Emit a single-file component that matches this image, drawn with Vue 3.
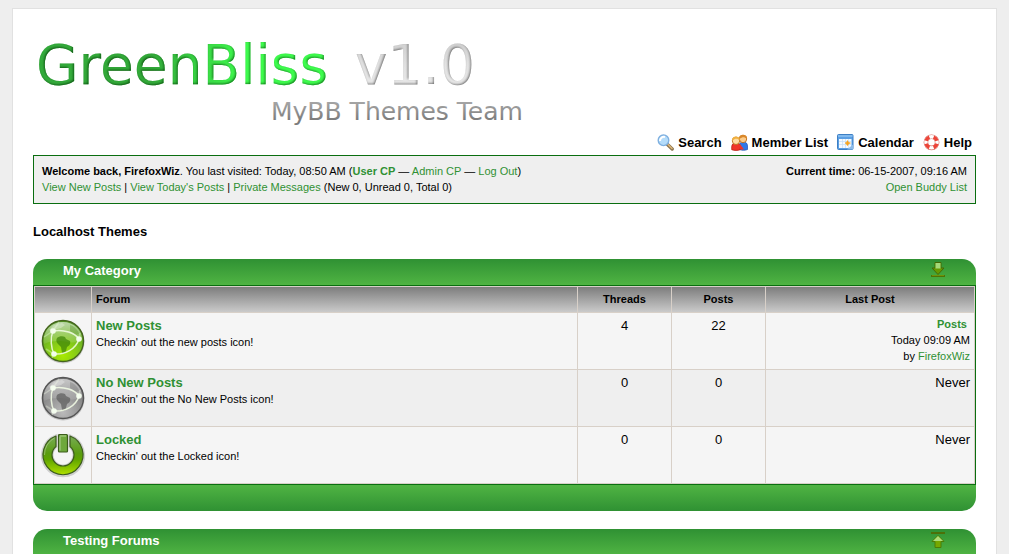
<script setup>
import { ref } from 'vue'

const open = ref(true)
const forums = [
  { name: 'New Posts', text: "Checkin' out the new posts icon!", icon: 'new', threads: 4, posts: 22, last: true },
  { name: 'No New Posts', text: "Checkin' out the No New Posts icon!", icon: 'old', threads: 0, posts: 0 },
  { name: 'Locked', text: "Checkin' out the Locked icon!", icon: 'locked', threads: 0, posts: 0 }
]
</script>

<template>
  <div class="page">
    <header>
      <a class="logo" href="#" aria-label="GreenBliss v1.0">
        <svg width="510" height="104" viewBox="0 0 510 104">
          <defs>
            <linearGradient id="leaf" x1="0" x2="1" y1="0" y2="0">
              <stop offset="0" stop-color="#34ac3c" />
              <stop offset=".4" stop-color="#34ac3a" />
              <stop offset=".72" stop-color="#40ff50" />
              <stop offset="1" stop-color="#40ff50" />
            </linearGradient>
            <linearGradient id="silver" x1="0" x2="0" y1="0" y2="1">
              <stop offset="0" stop-color="#cacaca" />
              <stop offset=".5" stop-color="#e2e2e2" />
              <stop offset="1" stop-color="#ececec" />
            </linearGradient>
            <linearGradient id="steel" x1="0" x2="0" y1="0" y2="1">
              <stop offset=".2" stop-color="#a4a4a4" />
              <stop offset=".8" stop-color="#7c7c7c" />
            </linearGradient>
            <filter id="bevel" x="-5%" y="-10%" width="110%" height="120%">
              <feGaussianBlur in="SourceAlpha" stdDeviation="1" result="b" />
              <feOffset in="b" dx="-1" dy="-1" result="o" />
              <feComposite in="SourceAlpha" in2="o" operator="out" result="edge" />
              <feFlood flood-color="#003000" flood-opacity=".9" />
              <feComposite in2="edge" operator="in" result="shade" />
              <feMerge>
                <feMergeNode in="SourceGraphic" />
                <feMergeNode in="shade" />
              </feMerge>
            </filter>
            <filter id="metal" x="-5%" y="-10%" width="110%" height="120%">
              <feGaussianBlur in="SourceAlpha" stdDeviation="1" result="b" />
              <feOffset in="b" dx="-1" dy="-1" result="o" />
              <feComposite in="SourceAlpha" in2="o" operator="out" result="edge" />
              <feFlood flood-color="#333" flood-opacity=".85" />
              <feComposite in2="edge" operator="in" result="shade" />
              <feMerge>
                <feMergeNode in="SourceGraphic" />
                <feMergeNode in="shade" />
              </feMerge>
            </filter>
          </defs>
          <text x="3" y="55" class="mark" fill="url(#leaf)" filter="url(#bevel)">GreenBliss</text>
          <text x="322" y="55" class="mark" fill="url(#silver)" filter="url(#metal)">v1.0</text>
          <text x="238" y="91" class="team" fill="url(#steel)">MyBB Themes Team</text>
        </svg>
      </a>
      <nav>
        <a href="#">
          <svg width="17" height="17" viewBox="0 0 17 17">
            <path d="M10 10l5.200 5" stroke="#8a7450" stroke-width="3.400" stroke-linecap="round" />
            <path d="M11 10.500l4 4" stroke="#e0b878" stroke-width="1.500" stroke-linecap="round" />
            <circle cx="6.500" cy="6.300" r="5.300" fill="#b4dcfa" stroke="#7fb0e0" stroke-width="1.400" />
            <path d="M3 7a4 4 0 0 1 5-4" stroke="#fff" stroke-width="2" fill="none" />
          </svg>
          Search
        </a>
        <a href="#">
          <svg width="17" height="17" viewBox="0 0 17 17">
            <path d="M8 12c0-3 2-4 4.500-4s4 1.500 4 4v3.500c-2 1-6 1-8 0z" fill="#2f78e8" stroke="#1d4fb0" stroke-width=".7" />
            <circle cx="12" cy="5" r="3.700" fill="#fbcb8a" stroke="#b8681c" stroke-width=".9" />
            <path d="M8 5C8 1 11 .6 12.500.7c2.500.2 3.900 2 3.600 4.300-1.800-1.800-4-2-5-1.500z" fill="#d9882a" />
            <path d="M.7 13c0-3 2-4.300 4.300-4.300S9.300 10 9.300 13v2.700c-2 1-6.500 1-8.600 0z" fill="#f0342a" stroke="#b01810" stroke-width=".7" />
            <path d="M7 11.500l2-1.500 4 5.500H9.500z" fill="#f0342a" />
            <circle cx="5" cy="6.800" r="3.700" fill="#ffdca4" stroke="#b87018" stroke-width=".9" />
            <path d="M1 6.500C1 3.500 3 2.300 5 2.400s4 1.300 3.900 3.700C7 4.700 4.500 4.600 3.500 5.200z" fill="#f0b040" />
          </svg>
          Member List
        </a>
        <a href="#">
          <svg width="17" height="17" viewBox="0 0 17 17">
            <rect x=".5" y=".5" width="15.500" height="15" rx="1" fill="#5b9fe4" stroke="#3d7fc4" />
            <rect x="2" y="5" width="12.500" height="9" fill="#f4faff" />
            <path d="M1 2h14.500" stroke="#8cc2f2" stroke-width="1.500" />
            <path d="M2 7.500h12M2 10.500h12M5.500 5v9M8.500 5v9M11.500 5v9" stroke="#c4def5" stroke-width=".7" />
            <path d="M10.500 6.500l1 1.800 2 .7-2 1-1 1.800-1-1.800-1.500-1 1.500-.7z" fill="#f6a31d" stroke="#f6a31d" stroke-width=".5" />
            <path d="M10 15.500h6v-5z" fill="#8dbbe8" />
          </svg>
          Calendar
        </a>
        <a href="#">
          <svg width="17" height="17" viewBox="0 0 17 17">
            <circle cx="8.500" cy="8.300" r="5.600" fill="none" stroke="#d8766e" stroke-width="4.600" />
            <circle cx="8.500" cy="8.300" r="5.600" fill="none" stroke="#fff" stroke-width="3.400" />
            <g fill="none" stroke="#ec4438" stroke-width="3.600">
              <path d="M3.100 6.800A5.600 5.600 0 0 1 6.400 3.100M10.600 3.100a5.600 5.600 0 0 1 3.300 3.700M13.900 9.800a5.600 5.600 0 0 1-3.300 3.700M6.400 13.500a5.600 5.600 0 0 1-3.300-3.700" />
            </g>
          </svg>
          Help
        </a>
      </nav>
    </header>

    <section class="panel">
      <div>
        <strong>Welcome back, FirefoxWiz</strong>. You last visited: Today, 08:50 AM
        (<a href="#"><strong>User CP</strong></a> — <a href="#">Admin CP</a> — <a href="#">Log Out</a>)<br />
        <a href="#">View New Posts</a> | <a href="#">View Today's Posts</a> | <a href="#">Private Messages</a>
        (New 0, Unread 0, Total 0)
      </div>
      <div class="time">
        <strong>Current time:</strong> 06-15-2007, 09:16 AM<br />
        <a href="#">Open Buddy List</a>
      </div>
    </section>

    <h1>Localhost Themes</h1>

    <section class="category">
      <div class="bar">
        <h2>My Category</h2>
        <button type="button" aria-label="Collapse My Category" :aria-expanded="open" @click="open = !open">
          <svg width="16" height="18" viewBox="0 0 16 18">
            <path d="M5 1.500h6V7h3L8 13.500 2 7h3z" fill="#669a00" stroke="#446a06" />
            <path d="M5.500 2h5v5.500h-5z" fill="#a4d878" />
            <path d="M1 15h14" stroke="#4f7206" stroke-width="2" />
            <path d="M2 14.500h12" stroke="#6f9408" />
          </svg>
        </button>
      </div>
      <div v-show="open" class="frame">
        <table>
          <colgroup>
            <col class="c-icon" /><col /><col class="c-num" /><col class="c-num" /><col class="c-last" />
          </colgroup>
          <thead>
            <tr>
              <th></th>
              <th class="left">Forum</th>
              <th>Threads</th>
              <th>Posts</th>
              <th>Last Post</th>
            </tr>
          </thead>
          <tbody>
            <tr v-for="f in forums" :key="f.name">
              <td class="icon">
                <svg v-if="f.icon !== 'locked'" width="46" height="46" viewBox="0 1 46 46">
                  <defs>
                    <radialGradient :id="'ball-' + f.icon" cx=".5" cy=".85" r=".8">
                      <stop offset="0" :stop-color="f.icon === 'new' ? '#a8ea00' : '#bababa'" />
                      <stop offset=".5" :stop-color="f.icon === 'new' ? '#80c61c' : '#969696'" />
                      <stop offset="1" :stop-color="f.icon === 'new' ? '#559c24' : '#747474'" />
                    </radialGradient>
                    <linearGradient :id="'gloss-' + f.icon" x1="0" x2="0" y1="0" y2="1">
                      <stop offset="0" stop-color="#fff" stop-opacity=".6" />
                      <stop offset="1" stop-color="#fff" stop-opacity=".08" />
                    </linearGradient>
                  </defs>
                  <circle cx="23" cy="24" r="21.500" fill="#777" opacity=".35" />
                  <circle cx="23" cy="23" r="20.500" :fill="`url(#ball-${f.icon})`" :stroke="f.icon === 'new' ? '#45641f' : '#555'" stroke-width="1.400" />
                  <path d="M4 26C2 12 12 4 23 4s19 8 19 17c-5 4-9 4-15 3S13 22 4 26z" :fill="`url(#gloss-${f.icon})`" />
                  <path d="M9 12l5-5 8-2 3 2-4 3-4 1-4 3z" fill="#fff" opacity=".3" />
                  <g :fill="f.icon === 'new' ? '#3c8208' : '#5c5c5c'" opacity=".7">
                    <path d="M17 20c2-2 6-2 8-1l1 2 4 2c1 3-1 5-3 6l-1 4c-1 3-3 4-4 2l-1-6-3-3c-2-2-2-4-1-6z" />
                    <path d="M30 7c4 1 8 5 9 9l-4 1-5-4z" opacity=".4" />
                  </g>
                  <g fill="none" stroke="#f5ffe8" stroke-width="1.500" opacity=".85">
                    <path d="M13 13C10 20 11 30 14 36M13 13c11-2 22 2 26 8M14 36c11 1 22-5 25-15" />
                    <path d="M13 13l6-9M13 13l-9 6M39 21l1-6M14 36l-2 4M14 36l-8-5" opacity=".4" />
                  </g>
                  <g fill="#f6fff0" opacity=".95">
                    <circle cx="13" cy="13" r="2.800" /><circle cx="39" cy="21" r="2.800" /><circle cx="14" cy="36" r="2.800" />
                  </g>
                </svg>
                <svg v-else width="46" height="46" viewBox="0 0 46 46">
                  <defs>
                    <linearGradient id="power" x1="0" x2="0" y1="0" y2="1">
                      <stop offset="0" stop-color="#78ac54" />
                      <stop offset=".45" stop-color="#5a9c10" />
                      <stop offset=".6" stop-color="#5fa400" />
                      <stop offset="1" stop-color="#b0e000" />
                    </linearGradient>
                  </defs>
                  <path d="M16 3A20.500 20.500 0 1 0 30 3V13.500A11 11 0 1 1 16 13.500Z" fill="none" opacity=".3" stroke="#777" stroke-width="3" />
                  <path d="M16 3A20 20 0 1 0 30 3V13.500A11 11 0 1 1 16 13.500Z" fill="url(#power)" stroke="#3c5c1c" stroke-width="1.200" stroke-linejoin="round" />
                  <rect x="18.500" y="1.500" width="9" height="17.500" rx="1" fill="#6ea83c" stroke="#3c5c1c" stroke-width="1.200" />
                  <path d="M20 3.500v14M20 3h6" stroke="#aed090" fill="none" />
                  <path d="M14.500 5A18.500 18.500 0 0 0 4.500 22" fill="none" stroke="#a9ca85" opacity=".7" />
                </svg>
              </td>
              <td>
                <a class="name" href="#">{{ f.name }}</a>
                <p>{{ f.text }}</p>
              </td>
              <td class="num">{{ f.threads }}</td>
              <td class="num">{{ f.posts }}</td>
              <td v-if="f.last" class="last">
                <a class="subject" href="#">Posts</a><br />
                Today 09:09 AM<br />
                by <a href="#">FirefoxWiz</a>
              </td>
              <td v-else class="never">Never</td>
            </tr>
          </tbody>
        </table>
      </div>
      <div class="foot"></div>
    </section>

    <section class="category">
      <div class="bar">
        <h2>Testing Forums</h2>
        <button type="button" aria-label="Expand Testing Forums" aria-expanded="false">
          <svg width="16" height="18" viewBox="0 0 16 18">
            <path d="M1 2h14" stroke="#4c7008" stroke-width="2" />
            <path d="M5 16.500h6V10.500h3L8 4.500 2 10.500h3z" fill="#76a800" stroke="#4b7c08" />
            <path d="M8 5L3 10h10z" fill="#acdc78" />
          </svg>
        </button>
      </div>
    </section>
  </div>
</template>

<style>
body {
  margin: 0;
  background: #eee;
}
</style>

<style scoped>
.page {
  margin: 8px 12px 0;
  padding: 20px;
  border: 1px solid #e1e1e1;
  background: #fff;
  color: #000;
  font: 13px/16px "Liberation Sans", Arial, sans-serif;
}
a {
  color: #2f9133;
  text-decoration: none;
}
.logo,
.logo svg {
  display: block;
}
.mark {
  font: 55px "DejaVu Sans", sans-serif;
}
.team {
  font: 25px "DejaVu Sans", sans-serif;
}
nav {
  display: flex;
  justify-content: flex-end;
  gap: 9px;
  padding: 1px 4px 4px 0;
}
nav a {
  display: flex;
  align-items: center;
  gap: 4px;
  color: #000;
  font-weight: bold;
}
.panel {
  display: flex;
  justify-content: space-between;
  padding: 7px 8px 8px;
  border: 1px solid #0a6e10;
  background: #efefef;
  font-size: 11px;
}
.time {
  text-align: right;
}
h1,
h2 {
  margin: 0;
  font-size: 13px;
  line-height: 16px;
}
h1 {
  margin: 20px 0 19px;
}
.category {
  margin-bottom: 18px;
}
.bar {
  display: flex;
  justify-content: space-between;
  box-sizing: border-box;
  height: 26px;
  padding: 2px 30px 0;
  border-radius: 14px 14px 0 0;
  background: linear-gradient(#2f9133, #50b443);
  color: #fff;
}
.bar h2 {
  padding-top: 2px;
}
.bar button {
  height: 18px;
  padding: 0;
  border: 0;
  background: none;
  cursor: pointer;
}
.bar svg {
  display: block;
}
.frame {
  border: 1px solid #0a6e10;
}
table {
  width: 100%;
  table-layout: fixed;
  border-collapse: separate;
  border-spacing: 1px;
  background: #d8d0c8;
}
.c-icon {
  width: 56px;
}
.c-num {
  width: 93px;
}
.c-last {
  width: 208px;
}
th {
  height: 23px;
  padding: 0 4px 2px;
  background: linear-gradient(#7d7d7d, #cacaca);
  font-size: 11px;
}
.left {
  text-align: left;
}
td {
  height: 47px;
  padding: 5px 4px 4px;
  background: #f5f5f5;
  vertical-align: top;
}
tr:nth-child(even) td {
  background: #efefef;
}
.icon svg {
  display: block;
  margin: 1px auto 0;
}
.name,
.subject {
  font-weight: bold;
}
td p {
  margin: 0;
  font-size: 11px;
}
.num {
  text-align: center;
}
.last {
  padding-top: 3px;
  padding-bottom: 5px;
  font-size: 11px;
  text-align: right;
}
.subject {
  padding-right: 3px;
}
.never {
  text-align: right;
}
.foot {
  height: 26px;
  border-radius: 0 0 14px 14px;
  background: linear-gradient(#50b443, #2f9133);
}
</style>
